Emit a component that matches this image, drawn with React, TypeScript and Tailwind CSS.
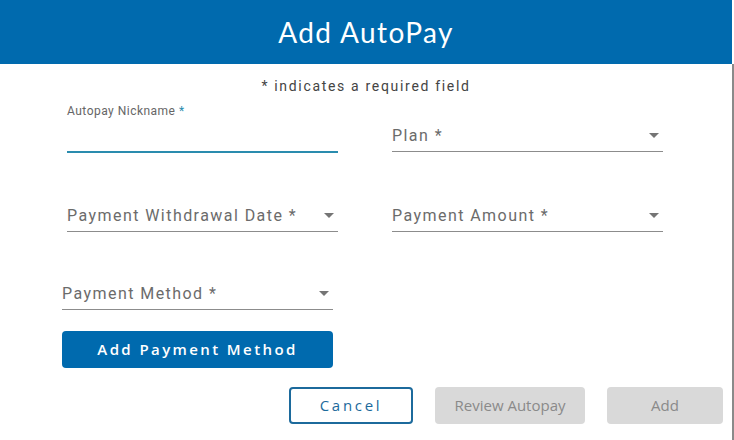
import { ReactNode } from "react";

const fieldFont = { fontFamily: "Roboto, 'Liberation Sans', sans-serif" };
const btnFont = { fontFamily: "'Open Sans', 'Liberation Sans', sans-serif" };

function Caret() {
  return (
    <svg width="10" height="5" viewBox="0 0 10 5" className="shrink-0">
      <path d="M0 0 L10 0 L5 5 Z" fill="#757575" />
    </svg>
  );
}

function SelectField({ label, className = "" }: { label: string; className?: string }) {
  return (
    <div className={`w-[271px] ${className}`}>
      <div className="flex items-center justify-between h-[28px] pb-[4px] pr-[4px] border-b border-[#8c8c8c]">
        <span className="text-[16px] text-[#6b6b6b] tracking-[0.09em]">{label}</span>
        <Caret />
      </div>
    </div>
  );
}

function Row({ children, className = "" }: { children: ReactNode; className?: string }) {
  return <div className={`flex gap-[54px] ${className}`}>{children}</div>;
}

export default function App() {
  return (
    <div className="w-[734px] h-[440px] flex bg-white overflow-hidden" style={fieldFont}>
      <div className="w-[732px] flex flex-col">
        <div className="h-[64px] bg-[#006aae] flex items-center justify-center">
          <h1
            className="text-white text-[28px] tracking-[0.05em]"
            style={{ fontFamily: "Lato, 'Open Sans', sans-serif" }}
          >
            Add AutoPay
          </h1>
        </div>

        <p className="mt-[12px] text-center text-[14px] text-[#444] tracking-[0.12em]">
          * indicates a required field
        </p>

        <Row className="ml-[67px] mt-[6px] items-end">
          <div className="w-[271px]">
            <div className="text-[12px] text-[#666] tracking-[0.04em] leading-[16px]">
              Autopay Nickname <span className="text-[#2a8cae]">*</span>
            </div>
            <div className="h-[34px] border-b-2 border-[#2a8cae]" />
          </div>
          <SelectField label="Plan *" className="mb-[1px]" />
        </Row>

        <Row className="ml-[67px] mt-[51px]">
          <SelectField label="Payment Withdrawal Date *" />
          <SelectField label="Payment Amount *" />
        </Row>

        <div className="ml-[62px] mt-[50px]">
          <SelectField label="Payment Method *" />
          <button
            className="mt-[21px] w-[271px] h-[37px] rounded-[4px] bg-[#006aae] text-white text-[15px] font-semibold tracking-[0.16em]"
            style={btnFont}
          >
            Add Payment Method
          </button>
        </div>

        <div className="mt-[19px] flex justify-end gap-[22px] pr-[9px]" style={btnFont}>
          <button className="w-[124px] h-[37px] rounded-[4px] border-2 border-[#1c6a9c] text-[#1c6a9c] text-[15px] tracking-[0.18em]">
            Cancel
          </button>
          <button className="w-[150px] h-[37px] rounded-[4px] bg-[#d9d9d9] text-[#8a8a8a] text-[15px]">
            Review Autopay
          </button>
          <button className="w-[116px] h-[37px] rounded-[4px] bg-[#d9d9d9] text-[#8a8a8a] text-[15px]">
            Add
          </button>
        </div>
      </div>
      <div className="w-[2px] flex flex-col">
        <div className="h-[64px] bg-white" />
        <div className="flex-1 bg-[#8a8a8a]" />
      </div>
    </div>
  );
}
